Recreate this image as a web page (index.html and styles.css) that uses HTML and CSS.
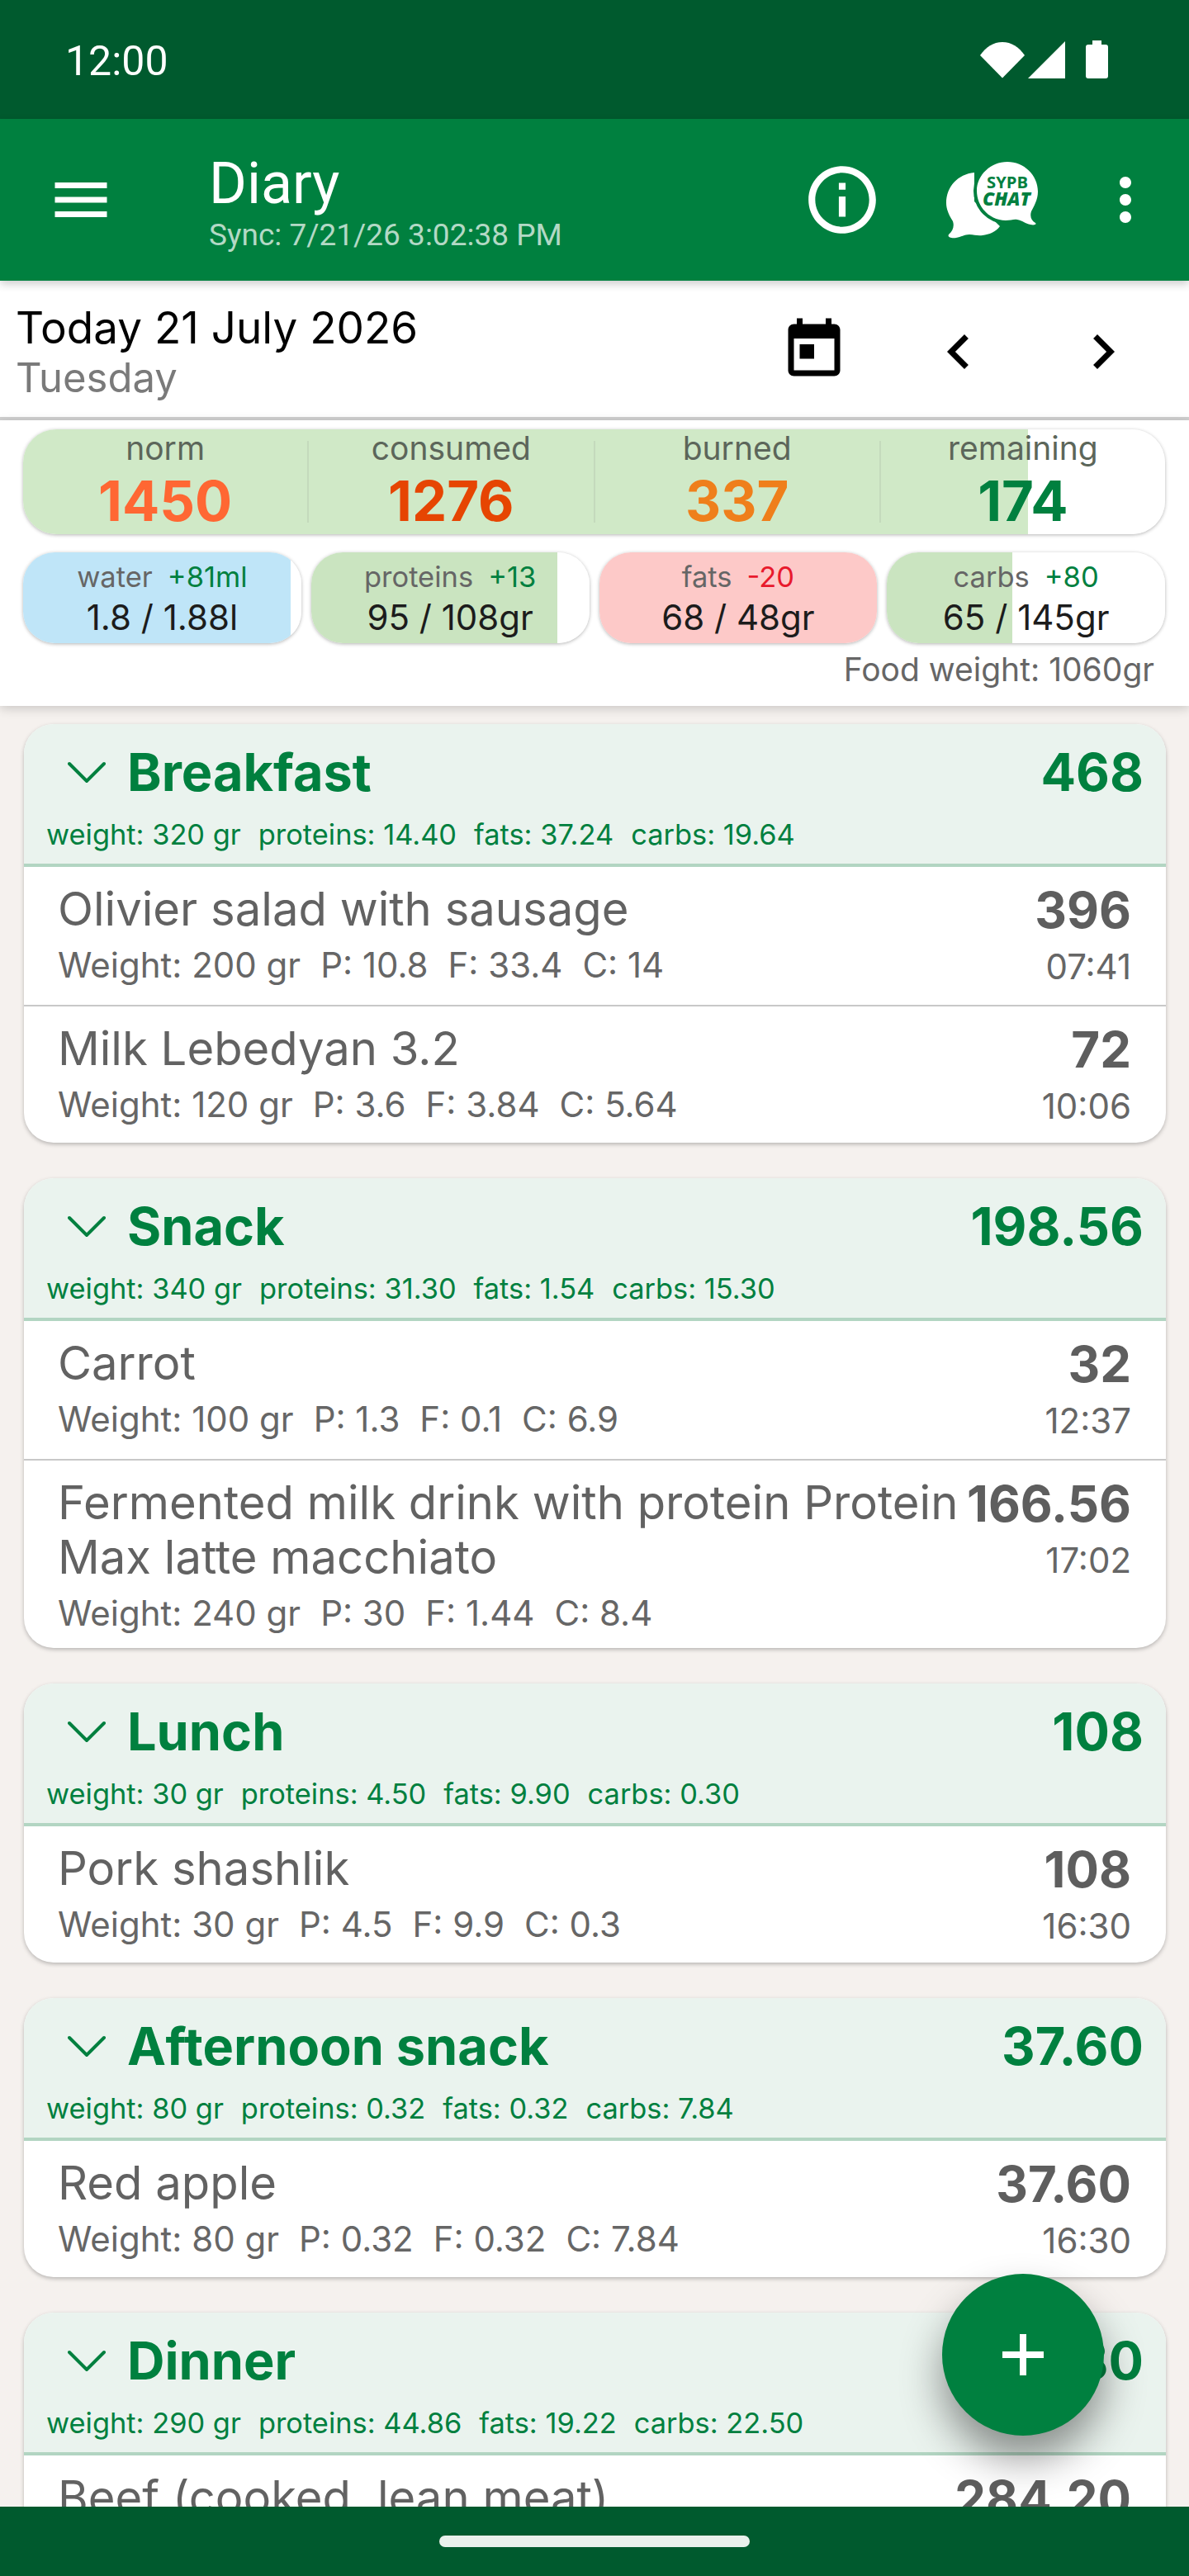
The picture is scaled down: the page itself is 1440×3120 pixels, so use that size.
FILE: index.html
```html
<!DOCTYPE html>
<html lang="en">
<head>
    <meta charset="UTF-8">
    <meta name="viewport" content="width=device-width, initial-scale=1.0">
    <title>Diary</title>
    <link rel="stylesheet" href="styles.css">
</head>
<body>
<div class="screen">
    <div class="statusbar">
        <span class="clock">12:00</span>
        <div class="status-icons">
            <svg class="ic-wifi" viewBox="0 0 54 45"><path d="M27 44.500 0 17C7 7 16 1 27 1s20 6 27 16z" fill="#fff"/></svg>
            <svg class="ic-signal" viewBox="0 0 45 45"><path d="M45 0v45H0z" fill="#fff"/></svg>
            <svg class="ic-battery" viewBox="0 0 27 46"><path d="M8 0h11v5h5c2 0 3 1 3 3v35c0 2-1 3-3 3H3c-2 0-3-1-3-3V8c0-2 1-3 3-3h5z" fill="#fff"/></svg>
        </div>
    </div>

    <div class="appbar">
        <svg class="ic-menu" viewBox="0 0 24 24"><path d="M3 18h18v-2H3v2zm0-5h18v-2H3v2zm0-7v2h18V6H3z" fill="#fff"/></svg>
        <div class="appbar-title">
            <div class="title">Diary</div>
            <div class="sync">Sync: 7/21/26 3:02:38 PM</div>
        </div>
        <svg class="ic-info" viewBox="0 0 24 24"><path d="M11 7h2v2h-2zm0 4h2v6h-2zm1-9C6.480 2 2 6.480 2 12s4.480 10 10 10 10-4.480 10-10S17.520 2 12 2zm0 18c-4.410 0-8-3.590-8-8s3.590-8 8-8 8 3.590 8 8-3.590 8-8 8z" fill="#fff"/></svg>
        <svg class="ic-chat" viewBox="0 0 112 96">
            <path d="M34 15C14 17 0 32 0 52c0 8 4 16 8 22 2 6 0 12-5 16-2 3 3 5 9 4 6-1 10-4 16-4 6 0 10 2 16 1 8-1 16-4 21-11L34 50z" fill="#fff"/>
            <path class="chat-front" d="M74 2c20 0 37 16 37 36 0 10-5 18-8 24-2 6 0 11 5 14 2 2-2 3-6 2-6-1-10-5-16-6-4-1-8 1-14 1-19 0-35-16-35-36C37 18 54 2 74 2z"/>
            <text class="chat-top" x="74" y="34" text-anchor="middle" textLength="50" lengthAdjust="spacingAndGlyphs">SYPB</text>
            <text class="chat-bottom" x="73" y="55" text-anchor="middle" textLength="58" lengthAdjust="spacingAndGlyphs">CHAT</text>
        </svg>
        <svg class="ic-more" viewBox="0 0 24 24"><path d="M12 8c1.100 0 2-.9 2-2s-.9-2-2-2-2 .9-2 2 .9 2 2 2zm0 2c-1.100 0-2 .9-2 2s.9 2 2 2 2-.9 2-2-.9-2-2-2zm0 6c-1.100 0-2 .9-2 2s.9 2 2 2 2-.9 2-2-.9-2-2-2z" fill="#fff"/></svg>
    </div>

    <div class="datebar">
        <div class="date-text">
            <div class="date">Today 21 July 2026</div>
            <div class="weekday">Tuesday</div>
        </div>
        <svg class="ic-today" viewBox="0 0 24 24"><path d="M19 3h-1V1h-2v2H8V1H6v2H5c-1.110 0-1.990.9-1.990 2L3 19c0 1.100.89 2 2 2h14c1.100 0 2-.9 2-2V5c0-1.100-.9-2-2-2zm0 16H5V8h14v11zM7 10h5v5H7z"/></svg>
        <svg class="ic-prev" viewBox="0 0 24 24"><path d="M15.410 7.410L14 6l-6 6 6 6 1.410-1.410L10.830 12z"/></svg>
        <svg class="ic-next" viewBox="0 0 24 24"><path d="M8.590 16.590L10 18l6-6-6-6-1.410 1.410L13.170 12z"/></svg>
    </div>

    <div class="summary">
        <div class="totals" style="--fill:88%">
            <div class="total"><span class="total-label">norm</span><span class="total-num c-norm">1450</span></div>
            <div class="total"><span class="total-label">consumed</span><span class="total-num c-consumed">1276</span></div>
            <div class="total"><span class="total-label">burned</span><span class="total-num c-burned">337</span></div>
            <div class="total"><span class="total-label">remaining</span><span class="total-num c-remaining">174</span></div>
        </div>
        <div class="macros">
            <div class="macro water" style="--fill:96%">
                <div class="macro-top"><span class="macro-name">water</span><span class="up">+81ml</span></div>
                <div class="macro-val">1.8 / 1.88l</div>
            </div>
            <div class="macro green" style="--fill:88.400%">
                <div class="macro-top"><span class="macro-name">proteins</span><span class="up">+13</span></div>
                <div class="macro-val">95 / 108gr</div>
            </div>
            <div class="macro red" style="--fill:100%">
                <div class="macro-top"><span class="macro-name">fats</span><span class="down">-20</span></div>
                <div class="macro-val">68 / 48gr</div>
            </div>
            <div class="macro green" style="--fill:45%">
                <div class="macro-top"><span class="macro-name">carbs</span><span class="up">+80</span></div>
                <div class="macro-val">65 / 145gr</div>
            </div>
        </div>
        <div class="food-weight">Food weight: 1060gr</div>
    </div>

    <div class="list">
        <div class="card">
            <div class="card-head">
                <div class="head-row">
                    <svg class="ic-down" viewBox="0 0 46 26"><path d="M2 3l21 21L44 3"/></svg>
                    <span class="meal">Breakfast</span>
                    <span class="meal-kcal">468</span>
                </div>
                <div class="head-stats"><span>weight: 320 gr</span><span>proteins: 14.40</span><span>fats: 37.24</span><span>carbs: 19.64</span></div>
            </div>
            <div class="item">
                <div class="item-main">
                    <div class="item-name">Olivier salad with sausage</div>
                    <div class="item-meta"><span>Weight: 200 gr</span><span>P: 10.8</span><span>F: 33.4</span><span>C: 14</span></div>
                </div>
                <div class="item-side"><div class="item-kcal">396</div><div class="item-time">07:41</div></div>
            </div>
            <div class="item">
                <div class="item-main">
                    <div class="item-name">Milk Lebedyan 3.2</div>
                    <div class="item-meta"><span>Weight: 120 gr</span><span>P: 3.6</span><span>F: 3.84</span><span>C: 5.64</span></div>
                </div>
                <div class="item-side"><div class="item-kcal">72</div><div class="item-time">10:06</div></div>
            </div>
        </div>

        <div class="card">
            <div class="card-head">
                <div class="head-row">
                    <svg class="ic-down" viewBox="0 0 46 26"><path d="M2 3l21 21L44 3"/></svg>
                    <span class="meal">Snack</span>
                    <span class="meal-kcal">198.56</span>
                </div>
                <div class="head-stats"><span>weight: 340 gr</span><span>proteins: 31.30</span><span>fats: 1.54</span><span>carbs: 15.30</span></div>
            </div>
            <div class="item">
                <div class="item-main">
                    <div class="item-name">Carrot</div>
                    <div class="item-meta"><span>Weight: 100 gr</span><span>P: 1.3</span><span>F: 0.1</span><span>C: 6.9</span></div>
                </div>
                <div class="item-side"><div class="item-kcal">32</div><div class="item-time">12:37</div></div>
            </div>
            <div class="item">
                <div class="item-main">
                    <div class="item-name">Fermented milk drink with protein Protein Max latte macchiato</div>
                    <div class="item-meta"><span>Weight: 240 gr</span><span>P: 30</span><span>F: 1.44</span><span>C: 8.4</span></div>
                </div>
                <div class="item-side"><div class="item-kcal">166.56</div><div class="item-time">17:02</div></div>
            </div>
        </div>

        <div class="card">
            <div class="card-head">
                <div class="head-row">
                    <svg class="ic-down" viewBox="0 0 46 26"><path d="M2 3l21 21L44 3"/></svg>
                    <span class="meal">Lunch</span>
                    <span class="meal-kcal">108</span>
                </div>
                <div class="head-stats"><span>weight: 30 gr</span><span>proteins: 4.50</span><span>fats: 9.90</span><span>carbs: 0.30</span></div>
            </div>
            <div class="item">
                <div class="item-main">
                    <div class="item-name">Pork shashlik</div>
                    <div class="item-meta"><span>Weight: 30 gr</span><span>P: 4.5</span><span>F: 9.9</span><span>C: 0.3</span></div>
                </div>
                <div class="item-side"><div class="item-kcal">108</div><div class="item-time">16:30</div></div>
            </div>
        </div>

        <div class="card">
            <div class="card-head">
                <div class="head-row">
                    <svg class="ic-down" viewBox="0 0 46 26"><path d="M2 3l21 21L44 3"/></svg>
                    <span class="meal">Afternoon snack</span>
                    <span class="meal-kcal">37.60</span>
                </div>
                <div class="head-stats"><span>weight: 80 gr</span><span>proteins: 0.32</span><span>fats: 0.32</span><span>carbs: 7.84</span></div>
            </div>
            <div class="item">
                <div class="item-main">
                    <div class="item-name">Red apple</div>
                    <div class="item-meta"><span>Weight: 80 gr</span><span>P: 0.32</span><span>F: 0.32</span><span>C: 7.84</span></div>
                </div>
                <div class="item-side"><div class="item-kcal">37.60</div><div class="item-time">16:30</div></div>
            </div>
        </div>

        <div class="card">
            <div class="card-head">
                <div class="head-row">
                    <svg class="ic-down" viewBox="0 0 46 26"><path d="M2 3l21 21L44 3"/></svg>
                    <span class="meal">Dinner</span>
                    <span class="meal-kcal">329.80</span>
                </div>
                <div class="head-stats"><span>weight: 290 gr</span><span>proteins: 44.86</span><span>fats: 19.22</span><span>carbs: 22.50</span></div>
            </div>
            <div class="item">
                <div class="item-main">
                    <div class="item-name">Beef (cooked, lean meat)</div>
                </div>
                <div class="item-side"><div class="item-kcal">284.20</div></div>
            </div>
        </div>
    </div>

    <div class="fab"><svg viewBox="0 0 50 50"><path d="M21 0h8v21h21v8H29v21h-8V29H0v-8h21z" fill="#fff"/></svg></div>
    <div class="navbar"><div class="nav-pill"></div></div>
</div>
</body>
</html>
```

FILE: styles.css
```css
*{
    margin: 0;
    padding: 0;
    box-sizing: border-box;
}
body{
    font-family: Inter, "Noto Sans", sans-serif;
    background: #f5f1ee;
}
.screen{
    width: 1440px;
    height: 3120px;
    position: relative;
    overflow: hidden;
    display: flex;
    flex-direction: column;
    background: #f5f1ee;
}

/* status bar */
.statusbar{
    height: 144px;
    flex: none;
    background: #005a2e;
    display: flex;
    align-items: center;
    justify-content: space-between;
    padding: 0 98px 0 79px;
}
.clock{
    font-family: Roboto, sans-serif;
    font-size: 50px;
    margin-top: 3px;
    color: #fff;
}
.status-icons{
    display: flex;
    align-items: center;
}
.ic-wifi{ width: 54px; height: 45px; }
.ic-signal{ width: 45px; height: 45px; margin-left: 4px; }
.ic-battery{ width: 27px; height: 46px; margin-left: 25px; }

/* app bar */
.appbar{
    height: 196px;
    flex: none;
    background: #00803f;
    display: flex;
    align-items: center;
    position: relative;
    z-index: 3;
    box-shadow: 0 4px 10px rgba(0,0,0,.2);
}
.ic-menu{ width: 84px; height: 84px; margin-left: 56px; flex: none; }
.appbar-title{ margin: 3px 0 0 113px; flex: 1; }
.title{
    font-family: Roboto, sans-serif;
    font-size: 70px;
    line-height: 82px;
    color: #fff;
}
.sync{
    font-family: Roboto, sans-serif;
    font-size: 37px;
    line-height: 44px;
    color: #b3d9c5;
}
.ic-info{ width: 98px; height: 98px; flex: none; margin-right: 77px; }
.ic-chat{ width: 112px; height: 96px; flex: none; margin-right: 63px; }
.chat-front{
    fill: #fff;
    stroke: #00803f;
    stroke-width: 8;
    paint-order: stroke;
}
.chat-top{ font: 700 20px "Open Sans", sans-serif; fill: #00803f; }
.chat-bottom{ font: italic 800 23px "Open Sans", sans-serif; fill: #00803f; }
.ic-more{ width: 84px; height: 84px; flex: none; margin-right: 35px; }

/* date row */
.datebar{
    height: 169px;
    flex: none;
    background: #fff;
    border-bottom: 4px solid #d0d0d0;
    display: flex;
    align-items: center;
    padding: 0 0 0 19px;
}
.date-text{ flex: 1; padding-top: 8px; }
.date{
    font-size: 53px;
    line-height: 62px;
    color: #000;
}
.weekday{
    font-size: 49px;
    line-height: 59px;
    color: #7a7a7a;
}
.ic-today{ width: 84px; height: 84px; flex: none; margin: 2px 91px 0 0; }
.ic-prev{ width: 84px; height: 84px; flex: none; margin: 6px 91px 0 0; }
.ic-next{ width: 84px; height: 84px; flex: none; margin: 6px 62px 0 0; }

/* totals + macros */
.summary{
    height: 346px;
    flex: none;
    background: #fff;
    padding: 11px 29px 0 28px;
    position: relative;
    z-index: 2;
    box-shadow: 0 3px 12px rgba(0,0,0,.18);
}
.totals{
    height: 127px;
    border-radius: 40px;
    display: flex;
    align-items: center;
    background: linear-gradient(to right, #d0e9c7 var(--fill), #fff var(--fill));
    box-shadow: 0 1px 4px rgba(0,0,0,.3);
}
.total{
    flex: 1;
    height: 99px;
    display: flex;
    flex-direction: column;
    align-items: center;
    border-right: 2px solid #c4dabc;
}
.total:last-child{ border-right: 0; }
.total-label{
    font-size: 39px;
    line-height: 30px;
    margin-top: -6px;
    color: #5c665a;
}
.total-num{
    font-size: 67px;
    font-weight: 700;
    line-height: 72px;
    margin-top: 13px;
}
.c-norm{ color: #ff6733; }
.c-consumed{ color: #e64502; }
.c-burned{ color: #ef7f1b; }
.c-remaining{ color: #00803f; }

.macros{
    display: flex;
    gap: 12px;
    margin-top: 22px;
}
.macro{
    width: 337px;
    height: 110px;
    border-radius: 38px;
    box-shadow: 0 1px 4px rgba(0,0,0,.3);
    text-align: center;
    background: linear-gradient(to right, var(--tint) var(--fill), #fff var(--fill));
}
.water{ --tint: #bfe5f8; }
.green{ --tint: #cae4c0; }
.red{ --tint: #fdc9c8; }
.macro-top{
    display: flex;
    justify-content: center;
    gap: 18px;
    font-size: 34.500px;
    line-height: 38px;
    padding-top: 11px;
}
.macro-name{ color: #666; }
.up{ color: #00803f; }
.down{ color: #e8192c; }
.macro-val{
    font-size: 42px;
    line-height: 48px;
    margin-top: 6px;
    color: #1c1c1c;
}
.food-weight{
    text-align: right;
    font-size: 39px;
    line-height: 44px;
    margin-top: 10px;
    padding-right: 13px;
    color: #666;
}

/* meal cards */
.list{
    display: flex;
    flex-direction: column;
    gap: 43px;
    padding: 22px 28px 0 29px;
}
.card{
    border-radius: 36px;
    background: #fff;
    box-shadow: 0 2px 5px rgba(0,0,0,.25);
    overflow: hidden;
    flex: none;
}
.card-head{
    height: 173px;
    background: #eaf3ee;
    border-bottom: 4px solid #b2d5c2;
    padding: 0 27px;
    color: #00803f;
}
.head-row{
    display: flex;
    align-items: center;
    height: 116px;
    padding-left: 26px;
}
.ic-down{
    width: 46px;
    height: 26px;
    fill: none;
    stroke: #00803f;
    stroke-width: 4;
    stroke-linecap: round;
    flex: none;
}
.meal{
    flex: 1;
    font-size: 63px;
    font-weight: 700;
    margin-left: 26px;
}
.meal-kcal{
    font-size: 63px;
    font-weight: 700;
}
.head-stats{
    display: flex;
    gap: 21px;
    font-size: 34.400px;
    line-height: 40px;
    margin-top: -2px;
}
.item{
    display: flex;
    padding: 18px 42px 16px 41px;
    min-height: 169px;
    border-bottom: 2px solid #c8c8c8;
}
.item:last-child{ border-bottom: 0; min-height: 165px; }
.item-main{ flex: 1; min-width: 0; }
.item-name{
    font-size: 56.200px;
    line-height: 66px;
    color: #626262;
}
.item-meta{
    display: flex;
    gap: 24px;
    font-size: 42px;
    line-height: 52px;
    margin-top: 9px;
    color: #666;
}
.item-side{
    text-align: right;
    flex: none;
    margin-left: 8px;
}
.item-kcal{
    font-size: 60px;
    font-weight: 700;
    line-height: 68px;
    color: #5e5e5e;
}
.item-time{
    font-size: 42px;
    line-height: 52px;
    margin-top: 9px;
    color: #666;
}

/* floating button, nav bar */
.fab{
    position: absolute;
    left: 1141px;
    top: 2754px;
    width: 196px;
    height: 196px;
    border-radius: 50%;
    background: #00803f;
    display: flex;
    align-items: center;
    justify-content: center;
    box-shadow: 0 28px 50px rgba(0,0,0,.42);
    z-index: 4;
}
.fab svg{ width: 50px; height: 50px; }
.navbar{
    position: absolute;
    left: 0;
    top: 3036px;
    width: 1440px;
    height: 84px;
    background: #005a2e;
    display: flex;
    justify-content: center;
    padding-top: 35px;
    z-index: 3;
}
.nav-pill{
    width: 376px;
    height: 14px;
    border-radius: 7px;
    background: #e9f1ec;
}
```
